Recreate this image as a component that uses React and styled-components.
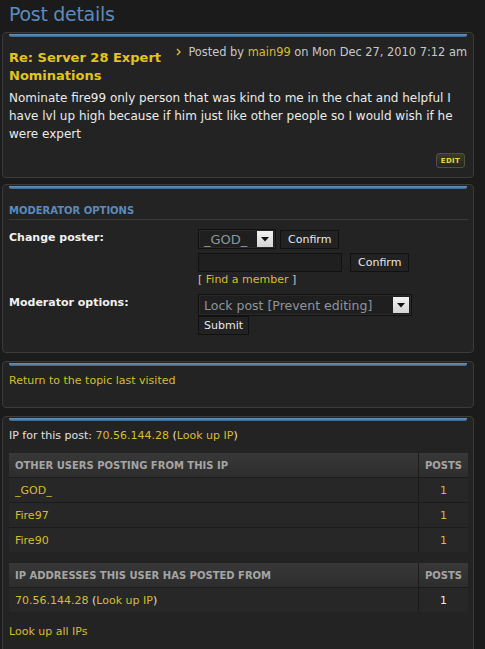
import React from "react";
import styled, { createGlobalStyle } from "styled-components";

const Global = createGlobalStyle`
  html, body {
    margin: 0;
    padding: 0;
    background: #1b1b1b;
  }
  body {
    font-family: "DejaVu Sans", Verdana, sans-serif;
    font-size: 11px;
    color: #e0e0e0;
  }
`;

const Page = styled.div`
  width: 472px;
  padding: 0 0 0 2px;
`;

const PageTitle = styled.h2`
  margin: 0;
  padding: 3px 0 0 7px;
  height: 32px;
  box-sizing: border-box;
  font-size: 19px;
  letter-spacing: -0.3px;
  font-weight: normal;
  color: #5b8bbd;
`;

const Panel = styled.section`
  position: relative;
  background: #232323;
  border: 1px solid #3b3b3b;
  border-radius: 4px;
  padding: ${props => props.$pad || "8px 6px"};
  margin-bottom: ${props => props.$gap || "6px"};
  box-sizing: border-box;

  &::before {
    content: "";
    position: absolute;
    left: 6px;
    right: 6px;
    top: 1px;
    height: 3px;
    border-radius: 0 0 2px 2px;
    background: linear-gradient(#6c94bb, #3f6488);
  }
`;

const PostHead = styled.div`
  display: flex;
  align-items: flex-start;
  margin-top: 8px;
`;

const PostTitle = styled.h3`
  margin: 0;
  width: 168px;
  font-size: 13px;
  line-height: 18px;
  font-weight: bold;
  color: #e2c51c;
`;

const Author = styled.p`
  margin: -4px 0 0;
  font-size: 11.4px;
  color: #c8c8c8;
  display: flex;
  align-items: center;
  gap: 5px;
  white-space: nowrap;
`;

const Link = styled.a`
  color: #d6bd2a;
  text-decoration: none;
`;

const Content = styled.div`
  font-size: 12px;
  line-height: 18px;
  color: #eaeaea;
  margin-top: 4px;
`;

const EditRow = styled.div`
  display: flex;
  justify-content: flex-end;
  margin-top: 10px;
  padding-right: 2px;
`;

const EditButton = styled.span`
  display: inline-block;
  font-size: 7px;
  font-weight: bold;
  color: #e6d34a;
  background: linear-gradient(#3a3a2e, #262620);
  border: 1px solid #505040;
  border-radius: 3px;
  padding: 3px 4px 2px;
  letter-spacing: 0.3px;
`;

const SectionHead = styled.h3`
  margin: 12px 0 0;
  padding-bottom: 3px;
  border-bottom: 1px solid #3a3a3a;
  font-size: 10px;
  font-weight: bold;
  color: #5b8bbd;
  width: 459px;
`;

const FormRow = styled.div`
  display: grid;
  grid-template-columns: 189px 1fr;
  margin-top: ${props => props.$top || "10px"};
`;

const Label = styled.label`
  font-weight: bold;
  font-size: 11px;
  color: #f0f0f0;
  padding-top: 2px;
`;

const Controls = styled.div`
  display: flex;
  flex-direction: column;
  align-items: flex-start;
  gap: ${props => props.$gap || "0"};
`;

const Line = styled.div`
  display: flex;
  align-items: center;
  gap: ${props => props.$gap || "4px"};
`;

const Select = styled.div`
  display: flex;
  align-items: center;
  justify-content: space-between;
  width: ${props => props.$w};
  height: ${props => props.$h || "20px"};
  box-sizing: border-box;
  background: #1f1f1f;
  border: 1px solid #111;
  box-shadow: inset 0 0 0 1px #2a2a2a;
  padding: 0 2px 0 5px;
  font-size: ${props => props.$fs || "12px"};
  color: #8f959b;
`;

const Arrow = styled.span`
  width: 16px;
  height: 16px;
  background: linear-gradient(#f2f2f2, #d4d4d4);
  display: flex;
  align-items: center;
  justify-content: center;
`;

const Button = styled.button`
  height: 19px;
  padding: 0 ${props => props.$px || "7px"};
  background: #222;
  border: 1px solid #111;
  color: #e8e8e8;
  font-family: "DejaVu Sans", Verdana, sans-serif;
  font-size: 11px;
`;

const TextBox = styled.div`
  width: 144px;
  height: 19px;
  box-sizing: border-box;
  background: #1f1f1f;
  border: 1px solid #111;
`;

const Bracket = styled.div`
  color: #c8c8c8;
  font-size: 11px;
  margin-top: -3px;
`;

const Plain = styled.p`
  margin: ${props => props.$m || "0"};
  font-size: 11px;
  color: #e0e0e0;
`;

const Table = styled.table`
  width: 459px;
  border-collapse: collapse;
  margin-top: ${props => props.$top || "10px"};
  font-size: 11px;
`;

const Th = styled.th`
  height: 24px;
  width: ${props => props.$w || "auto"};
  padding: 0 6px;
  text-align: ${props => (props.$center ? "center" : "left")};
  font-size: 10px;
  font-weight: bold;
  color: #a5a5a5;
  background: linear-gradient(#383838, #2d2d2d);
  border-right: ${props => (props.$sep ? "1px solid #1c1c1c" : "none")};
`;

const Td = styled.td`
  height: 24px;
  padding: 0 6px;
  text-align: ${props => (props.$center ? "center" : "left")};
  color: ${props => props.$color || "#d6bd2a"};
  background: #272727;
  border-top: 1px solid #1c1c1c;
  border-right: ${props => (props.$sep ? "1px solid #1c1c1c" : "none")};
`;

const Caret = () => (
  <svg width="7" height="8" viewBox="0 0 7 8">
    <path d="M1 1 L4 4 L1 7" stroke="#d6bd2a" strokeWidth="1.4" fill="none" />
  </svg>
);

const Down = () => (
  <svg width="8" height="5" viewBox="0 0 8 5">
    <path d="M0 0 H8 L4 4.5 Z" fill="#111" />
  </svg>
);

const otherUsers = ["_GOD_", "Fire97", "Fire90"];

export default function App() {
  return (
    <Page>
      <Global />
      <PageTitle>Post details</PageTitle>

      <Panel $pad="8px 6px 9px 6px">
        <PostHead>
          <PostTitle>Re: Server 28 Expert Nominations</PostTitle>
          <Author>
            <Caret />
            <span>
              Posted by <Link>main99</Link> on Mon Dec 27, 2010 7:12 am
            </span>
          </Author>
        </PostHead>
        <Content>
          Nominate fire99 only person that was kind to me in the chat and helpful I have lvl up
          high because if him just like other people so I would wish if he were expert
        </Content>
        <EditRow>
          <EditButton>EDIT</EditButton>
        </EditRow>
      </Panel>

      <Panel $pad="8px 6px 17px 6px" $gap="8px">
        <SectionHead>MODERATOR OPTIONS</SectionHead>
        <FormRow $top="9px">
          <Label>Change poster:</Label>
          <Controls $gap="4px">
            <Line>
              <Select $w="78px" $fs="13px">
                _GOD_
                <Arrow>
                  <Down />
                </Arrow>
              </Select>
              <Button $px="7px">Confirm</Button>
            </Line>
            <Line $gap="8px">
              <TextBox />
              <Button>Confirm</Button>
            </Line>
            <Bracket>
              [ <Link>Find a member</Link> ]
            </Bracket>
          </Controls>
        </FormRow>
        <FormRow $top="8px">
          <Label>Moderator options:</Label>
          <Controls>
            <Select $w="214px" $h="22px" $fs="12.5px">
              Lock post [Prevent editing]
              <Arrow>
                <Down />
              </Arrow>
            </Select>
            <Button $px="5px">Submit</Button>
          </Controls>
        </FormRow>
      </Panel>

      <Panel $pad="12px 6px 20px 6px" $gap="8px">
        <Link>Return to the topic last visited</Link>
      </Panel>

      <Panel $pad="12px 6px 14px 6px" $gap="0">
        <Plain>
          IP for this post: <Link>70.56.144.28</Link> (<Link>Look up IP</Link>)
        </Plain>
        <Table $top="11px">
          <thead>
            <tr>
              <Th $sep>OTHER USERS POSTING FROM THIS IP</Th>
              <Th $center $w="36px">POSTS</Th>
            </tr>
          </thead>
          <tbody>
            {otherUsers.map(name => (
              <tr key={name}>
                <Td $sep>{name}</Td>
                <Td $center>1</Td>
              </tr>
            ))}
          </tbody>
        </Table>
        <Table $top="11px">
          <thead>
            <tr>
              <Th $sep>IP ADDRESSES THIS USER HAS POSTED FROM</Th>
              <Th $center $w="36px">POSTS</Th>
            </tr>
          </thead>
          <tbody>
            <tr>
              <Td $sep $color="#e0e0e0">
                <Link>70.56.144.28</Link> (<Link>Look up IP</Link>)
              </Td>
              <Td $center $color="#e8e8e8">
                1
              </Td>
            </tr>
          </tbody>
        </Table>
        <Plain $m="13px 0 0">
          <Link>Look up all IPs</Link>
        </Plain>
      </Panel>
    </Page>
  );
}
